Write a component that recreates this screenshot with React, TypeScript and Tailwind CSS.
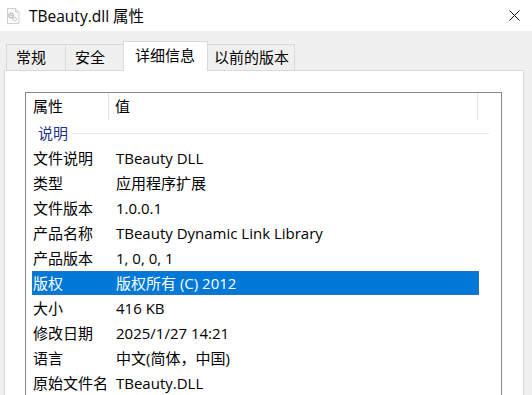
const rows: [string, string][] = [
  ["文件说明", "TBeauty DLL"],
  ["类型", "应用程序扩展"],
  ["文件版本", "1.0.0.1"],
  ["产品名称", "TBeauty Dynamic Link Library"],
  ["产品版本", "1, 0, 0, 1"],
  ["版权", "版权所有 (C) 2012"],
  ["大小", "416 KB"],
  ["修改日期", "2025/1/27 14:21"],
  ["语言", "中文(简体，中国)"],
  ["原始文件名", "TBeauty.DLL"],
];

const DllIcon = () => (
  <svg width="14" height="16" viewBox="0 0 14 16">
    <path d="M1.5 0.5h8l3.5 3.5v11.5h-11.5z" fill="#fafafa" stroke="#d0d0d0" />
    <path d="M9.5 0.5v3.5h3.5" fill="#eee" stroke="#d0d0d0" />
    <circle cx="5" cy="7.5" r="2.3" fill="none" stroke="#a8a8a8" strokeWidth="1.4" strokeDasharray="1.2 0.6" />
    <circle cx="5" cy="7.5" r="0.8" fill="#a8a8a8" />
    <circle cx="8.5" cy="11" r="1.8" fill="none" stroke="#bdbdbd" strokeWidth="1.2" strokeDasharray="1 0.6" />
  </svg>
);

const App = () => {
  return (
    <div className="w-[532px] h-[395px] overflow-hidden bg-[#f0f0f0] text-black font-['Open_Sans','Noto_Sans_CJK_SC',sans-serif] text-[15px]">
      {/* title bar */}
      <div className="h-[31px] bg-white flex items-center">
        <div className="ml-[6px] mt-[1px] flex">
          <DllIcon />
        </div>
        <span className="ml-[9px] text-[15.5px] leading-[20px]">TBeauty.dll 属性</span>
        <svg className="ml-auto mr-[12px]" width="11" height="11" viewBox="0 0 11 11">
          <path d="M0.5 0.5l10 10M10.5 0.5l-10 10" stroke="#111" strokeWidth="1" />
        </svg>
      </div>

      {/* tabs */}
      <div className="h-[39px] flex items-end pl-[6px]">
        <div className="h-[26px] w-[60px] border border-b-0 border-[#d9d9d9] pl-[9px] leading-[25px]">常规</div>
        <div className="h-[26px] w-[59px] -ml-px border border-b-0 border-[#d9d9d9] pl-[9px] leading-[25px]">安全</div>
        <div className="relative z-10 h-[30px] w-[85px] -ml-px -mb-px bg-white border border-b-0 border-[#d9d9d9] pl-[11px] leading-[27px]">
          详细信息
        </div>
        <div className="h-[26px] w-[88px] -ml-px border border-b-0 border-[#d9d9d9] pl-[6px] leading-[25px]">以前的版本</div>
      </div>

      {/* panel */}
      <div className="ml-[4px] w-[520px] h-[330px] bg-white border border-[#d9d9d9] pt-[21px] pl-[20px]">
        <div className="w-[477px] h-[320px] border border-[#828790] bg-white">
          {/* header */}
          <div className="h-[27px] flex">
            <div className="w-[83px] pl-[7px] leading-[27px] border-r border-[#e5e5e5]">属性</div>
            <div className="w-[369px] pl-[6px] leading-[27px] border-r border-[#e5e5e5]">值</div>
          </div>
          {/* group */}
          <div className="h-[26px] flex items-center pl-[12px]">
            <span className="text-[#1e3287] leading-[20px]">说明</span>
            <div className="ml-[4px] w-[417px] h-px bg-[#e2e6ef]" />
          </div>
          {rows.map(([k, v]) => {
            const sel = k === "版权";
            return (
              <div key={k} className="h-[25px] pl-[6px]">
                <div
                  className={
                    sel
                      ? "h-[24px] w-[447px] flex bg-[#0078d7] text-white border border-dotted border-[#4a6f9a]"
                      : "h-[24px] w-[447px] flex border border-transparent"
                  }
                >
                  <div className="w-[76px] leading-[22px]">{k}</div>
                  <div className="pl-[7px] leading-[22px] whitespace-nowrap">{v}</div>
                </div>
              </div>
            );
          })}
        </div>
      </div>
    </div>
  );
};

export default App;
